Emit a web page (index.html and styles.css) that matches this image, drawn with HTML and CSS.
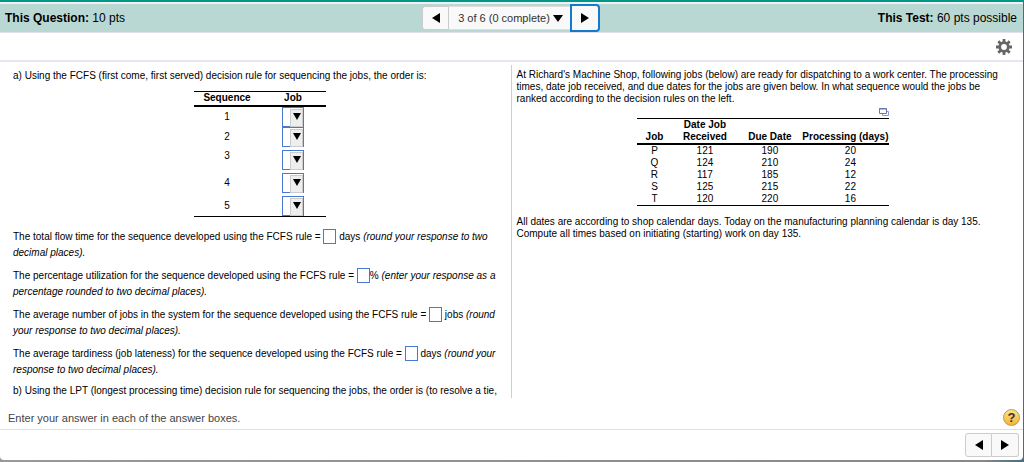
FILE: index.html
```
<!DOCTYPE html>
<html lang="en">
<head>
    <meta charset="UTF-8">
    <meta name="viewport" content="width=device-width, initial-scale=1.0">
    <title>This Question: 10 pts</title>
    <link rel="stylesheet" href="styles.css">
</head>
<body>
    <div id="app">
        <header class="topbar">
            <div class="points"><b>This Question:</b> 10 pts</div>
            <nav class="pager">
                <button class="prev" aria-label="Previous question"><svg width="8" height="10"><path d="M8 0v10L0 5z"/></svg></button>
                <button class="current">3 of 6 (0 complete) <svg width="10" height="7"><path d="M0 0h10L5 7z"/></svg></button>
                <button class="next" aria-label="Next question"><svg width="8" height="10"><path d="M0 0v10l8-5z"/></svg></button>
            </nav>
            <div class="points right"><b>This Test:</b> 60 pts possible</div>
        </header>

        <div class="toolbar">
            <button class="gear" aria-label="Settings">
                <svg width="16" height="16" viewBox="0 0 16 16">
                    <circle cx="8" cy="8" r="4.3" fill="none" stroke="#666" stroke-width="2.8"/>
                    <path d="M8 0v3M8 13v3M0 8h3M13 8h3M2.3 2.3l2.2 2.2M11.5 11.5l2.2 2.2M2.3 13.7l2.2-2.2M11.5 4.5l2.2-2.2" stroke="#666" stroke-width="2.8"/>
                </svg>
            </button>
        </div>

        <main class="panes">
            <section class="answers">
                <p class="lead">a) Using the FCFS (first come, first served) decision rule for sequencing the jobs, the order is:</p>
                <table class="sequence">
                    <thead>
                        <tr><th>Sequence</th><th>Job</th></tr>
                    </thead>
                    <tbody>
                        <tr class="tight"><td><label for="job1">1</label></td><td><span class="pick"><select id="job1"><option></option><option>P</option><option>Q</option><option>R</option><option>S</option><option>T</option></select></span></td></tr>
                        <tr class="tight"><td><label for="job2">2</label></td><td><span class="pick"><select id="job2"><option></option><option>P</option><option>Q</option><option>R</option><option>S</option><option>T</option></select></span></td></tr>
                        <tr><td class="high"><label for="job3">3</label></td><td><span class="pick"><select id="job3"><option></option><option>P</option><option>Q</option><option>R</option><option>S</option><option>T</option></select></span></td></tr>
                        <tr><td><label for="job4">4</label></td><td><span class="pick"><select id="job4"><option></option><option>P</option><option>Q</option><option>R</option><option>S</option><option>T</option></select></span></td></tr>
                        <tr><td><label for="job5">5</label></td><td><span class="pick"><select id="job5"><option></option><option>P</option><option>Q</option><option>R</option><option>S</option><option>T</option></select></span></td></tr>
                    </tbody>
                </table>
                <p><label for="flow">The total flow time for the sequence developed using the FCFS rule =</label> <input type="text" id="flow"> days <i>(round your response to two<br>decimal places).</i></p>
                <p><label for="util">The percentage utilization for the sequence developed using the FCFS rule =</label> <input type="text" id="util">% <i>(enter your response as a<br>percentage rounded to two decimal places).</i></p>
                <p><label for="avgjobs">The average number of jobs in the system for the sequence developed using the FCFS rule =</label> <input type="text" id="avgjobs"> jobs <i>(round<br>your response to two decimal places).</i></p>
                <p><label for="tardy">The average tardiness (job lateness) for the sequence developed using the FCFS rule =</label> <input type="text" id="tardy"> days <i>(round your<br>response to two decimal places).</i></p>
                <p class="part">b) Using the LPT (longest processing time) decision rule for sequencing the jobs, the order is (to resolve a tie,</p>
            </section>

            <section class="problem">
                <p>At Richard's Machine Shop, following jobs (below) are ready for dispatching to a work center. The processing<br>times, date job received, and due dates for the jobs are given below. In what sequence would the jobs be<br>ranked according to the decision rules on the left.</p>
                <div class="data">
                    <button class="popout" aria-label="Open table">
                        <svg width="10" height="9" fill="#fff" stroke="#6a75b8"><path d="M3.500 3.500h6v4h-6z" stroke="#8f98cc"/><path d="M.5.5h7v5h-7z"/><path d="M0 1h8"/></svg>
                    </button>
                    <table class="jobs">
                        <thead>
                            <tr><th class="job">Job</th><th class="date">Date Job<br>Received</th><th class="date">Due Date</th><th>Processing (days)</th></tr>
                        </thead>
                        <tbody>
                            <tr><td>P</td><td>121</td><td>190</td><td>20</td></tr>
                            <tr><td>Q</td><td>124</td><td>210</td><td>24</td></tr>
                            <tr><td>R</td><td>117</td><td>185</td><td>12</td></tr>
                            <tr><td>S</td><td>125</td><td>215</td><td>22</td></tr>
                            <tr><td>T</td><td>120</td><td>220</td><td>16</td></tr>
                        </tbody>
                    </table>
                </div>
                <p>All dates are according to shop calendar days. Today on the manufacturing planning calendar is day 135.<br>Compute all times based on initiating (starting) work on day 135.</p>
            </section>
        </main>

        <div class="hint">
            <span>Enter your answer in each of the answer boxes.</span>
            <button class="help" aria-label="Help">?</button>
        </div>

        <footer>
            <nav class="pager">
                <button class="prev" aria-label="Previous"><svg width="8" height="10"><path d="M8 0v10L0 5z"/></svg></button>
                <button class="forward" aria-label="Next"><svg width="8" height="10"><path d="M0 0v10l8-5z"/></svg></button>
            </nav>
        </footer>
    </div>
</body>
</html>
```

FILE: styles.css
```
* {
    box-sizing: border-box;
}

body {
    margin: 0;
    background: linear-gradient(to right, #999, #888 96%, #456f7d);
    font-family: "Liberation Sans", Arial, sans-serif;
    font-size: 10px;
    color: #000;
}

#app {
    display: flex;
    flex-direction: column;
    height: calc(100vh - 2px);
    margin-right: 1px;
    background-color: #fff;
    border-top: 2px solid #009688;
    border-radius: 0 0 4px 4px;
    overflow: hidden;
}

p {
    margin: 0;
}

button {
    margin: 0;
    padding: 0;
    border: none;
    font-family: inherit;
    cursor: pointer;
}

.topbar {
    display: grid;
    grid-template-columns: 1fr auto 1fr;
    align-items: center;
    height: 31px;
    padding: 0 6px 0 5px;
    border-top: 2px solid #eef1f3;
    border-bottom: 1px solid #dfe1ea;
    background-color: #bad8d3;
}

.points {
    font-size: 12px;
}

.right {
    text-align: right;
}

.pager {
    display: flex;
    align-items: center;
}

.pager button {
    display: flex;
    align-items: center;
    justify-content: center;
    height: 24px;
    border: 1px solid #ccc;
    background-color: #f9f9f9;
}

.pager .prev {
    width: 27px;
    border-radius: 3px 0 0 3px;
}

.pager .current {
    width: 121px;
    padding-left: 2px;
    gap: 3px;
    border-width: 1px 0;
    border-color: #ddd;
    font-size: 11px;
    color: #333;
}

.pager .next {
    width: 30px;
    height: 28px;
    border: 2px solid #1479ca;
    border-radius: 0 4px 4px 0;
}

.pager .forward {
    width: 27px;
    border-left: none;
    border-radius: 0 3px 3px 0;
}

.toolbar {
    display: flex;
    align-items: center;
    justify-content: flex-end;
    height: 29px;
    padding-right: 11px;
    border-bottom: 2px solid #e6e6ef;
}

.gear,
.popout {
    display: flex;
    background: none;
}

.panes {
    flex: 1;
    min-height: 0;
    display: grid;
    grid-template-columns: 1fr 1fr;
    padding-top: 3px;
    overflow: hidden;
}

.answers {
    padding-left: 13px;
    border-right: 1px solid #ccccdb;
    line-height: 16px;
    white-space: nowrap;
    overflow: hidden;
}

.answers p {
    margin-bottom: 7px;
}

.answers .lead {
    margin: 3px 0 7px;
}

.answers .part {
    line-height: 12px;
}

table {
    border-collapse: collapse;
}

th,
td {
    padding: 0;
    text-align: center;
}

.sequence {
    width: 132px;
    margin: 0 0 12px 181px;
    border-top: 1px solid #000;
    border-bottom: 1px solid #000;
    line-height: 12px;
}

.sequence thead,
.jobs thead {
    border-bottom: 2px solid #000;
}

.sequence th {
    height: 14px;
}

.sequence th:first-child {
    width: 66px;
}

.sequence td {
    height: 23px;
    padding-top: 3px;
}

.sequence .tight td {
    height: 20px;
    padding-top: 0;
}

.sequence .high {
    vertical-align: top;
}

.pick {
    position: relative;
    display: block;
    width: 22px;
    height: 20px;
    margin: 0 auto;
}

.pick select {
    display: block;
    width: 22px;
    height: 20px;
    padding: 0;
    border: 1px solid #4a78d0;
    border-radius: 0;
    background-color: #fff;
    appearance: none;
}

.pick::before {
    content: "";
    position: absolute;
    right: 1px;
    top: 2px;
    width: 11px;
    height: 16px;
    border: 1px solid #ccc;
    background-color: #eee;
    pointer-events: none;
}

.pick::after {
    content: "";
    position: absolute;
    right: 3px;
    top: 6px;
    border: solid transparent;
    border-width: 7px 4px 0;
    border-top-color: #000;
    pointer-events: none;
}

.answers input {
    width: 13px;
    height: 15px;
    margin: 0;
    padding: 0;
    border: 1px solid #4a78d0;
    background-color: #fff;
    vertical-align: middle;
}

.problem {
    padding: 4px 0 0 5px;
    line-height: 12px;
    white-space: nowrap;
}

.data {
    width: 252px;
    margin: 3px 0 10px 120px;
}

.popout {
    margin: 0 0 1px auto;
}

.jobs {
    width: 100%;
    border-top: 1px solid #000;
    border-bottom: 1px solid #000;
}

.jobs th {
    vertical-align: bottom;
}

.jobs .job {
    width: 36px;
}

.jobs .date {
    width: 65px;
}

.jobs td:last-child {
    padding-left: 10px;
}

.hint {
    display: flex;
    align-items: center;
    justify-content: space-between;
    height: 32px;
    padding: 8px 3px 0 8px;
    border-bottom: 1px solid #d9e0e8;
    font-size: 11px;
    color: #444;
}

.help {
    width: 17px;
    height: 17px;
    border: 1px solid #b9985a;
    border-radius: 50%;
    background: linear-gradient(#ffe08a, #f2b632);
    font-size: 13px;
    font-weight: bold;
    line-height: 15px;
    color: #333;
}

footer {
    display: flex;
    align-items: center;
    justify-content: flex-end;
    height: 30px;
    padding-right: 4px;
}
```
